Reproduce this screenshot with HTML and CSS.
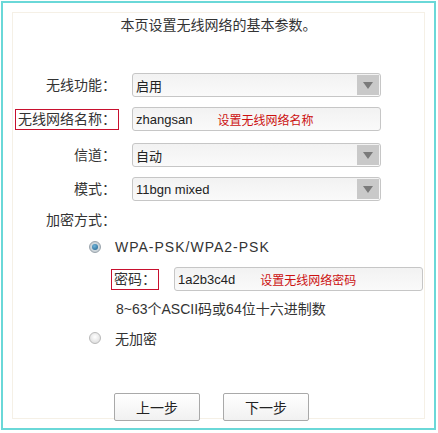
FILE: index.html
```html
<!DOCTYPE html>
<html lang="zh-CN">
<head>
    <meta charset="UTF-8" />
    <title>无线设置</title>
    <link rel="stylesheet" href="styles.css">
</head>
<body>

<div class="frame">
    <div class="panel">
        <p class="intro">本页设置无线网络的基本参数。</p>

        <div class="form">
            <div class="row">
                <div class="label"><span>无线功能：</span></div>
                <div class="select"><span class="value">启用</span><span class="arrow"></span></div>
            </div>
            <div class="row row-wide">
                <div class="label"><span class="mark">无线网络名称：</span></div>
                <div class="input"><span class="value">zhangsan</span><span class="tip">设置无线网络名称</span></div>
            </div>
            <div class="row">
                <div class="label"><span>信道：</span></div>
                <div class="select"><span class="value">自动</span><span class="arrow"></span></div>
            </div>
            <div class="row">
                <div class="label"><span>模式：</span></div>
                <div class="select"><span class="value">11bgn mixed</span><span class="arrow"></span></div>
            </div>

            <div class="enc-title">
                <div class="label"><span>加密方式：</span></div>
            </div>

            <div class="enc">
                <div class="radio-row">
                    <span class="radio checked"></span>
                    <span class="radio-text latin">WPA-PSK/WPA2-PSK</span>
                </div>
                <div class="pw-row">
                    <span class="mark">密码：</span>
                    <div class="input"><span class="value">1a2b3c4d</span><span class="tip">设置无线网络密码</span></div>
                </div>
                <div class="hint">8~63个ASCII码或64位十六进制数</div>
                <div class="radio-row second">
                    <span class="radio"></span>
                    <span class="radio-text">无加密</span>
                </div>
            </div>

            <div class="buttons">
                <button class="btn">上一步</button>
                <button class="btn">下一步</button>
            </div>
        </div>
    </div>
</div>

</body>
</html>
```

FILE: styles.css
```css
body {
    margin: 0;
    font-family: "Liberation Sans", "Noto Sans CJK SC", sans-serif;
    color: #333;
    background: #fff;
}

.frame {
    margin: 1px;
    width: 431px;
    height: 425px;
    border: 2px solid #6ad8d8;
}

.panel {
    margin: 9px;
    height: 405px;
    border: 1px solid #f5f0e6;
}

.intro {
    margin: 2px 0 0;
    font-size: 14px;
    line-height: 20px;
    text-align: center;
    color: #333;
}

.form {
    margin-top: 38px;
}

.row {
    display: flex;
    align-items: center;
    height: 24px;
    margin-bottom: 10px;
}

.row-wide {
    margin-bottom: 12px;
}

.label {
    width: 106px;
    text-align: right;
    font-size: 14px;
    line-height: 19px;
    flex-shrink: 0;
}

.label span,
.mark {
    display: inline-block;
    padding: 0 2px;
    border: 1px solid transparent;
    font-size: 14px;
    line-height: 19px;
}

.mark {
    border-color: #c8102e !important;
}

.select,
.input {
    display: flex;
    align-items: center;
    box-sizing: border-box;
    width: 249px;
    height: 24px;
    margin-left: 13px;
    border: 1px solid #c6c6c6;
    border-radius: 3px;
    background: linear-gradient(#f2f2f2, #fafafa);
    font-size: 13px;
    color: #222;
}

.value {
    padding-left: 3px;
}

.select .value {
    flex: 1;
}

.arrow {
    width: 22px;
    height: 20px;
    margin-right: 1px;
    background: #c9c9c9;
    position: relative;
}

.arrow::after {
    content: "";
    position: absolute;
    left: 6px;
    top: 7px;
    border-left: 5px solid transparent;
    border-right: 5px solid transparent;
    border-top: 7px solid #7a7a7a;
}

.tip {
    margin-left: 25px;
    font-size: 12px;
    color: #cc1111;
}

.enc-title {
    margin-top: 9px;
    height: 18px;
    display: flex;
    align-items: center;
}

.enc {
    padding-left: 76px;
}

.radio-row {
    display: flex;
    align-items: center;
    height: 18px;
    margin-top: 9px;
}

.radio-row.second {
    margin-top: 11px;
}

.radio {
    box-sizing: border-box;
    width: 12px;
    height: 12px;
    border-radius: 50%;
    border: 1px solid #b9b9b9;
    background: radial-gradient(circle at 50% 40%, #ffffff, #d6d6d6);
    margin-right: 14px;
    position: relative;
}

.radio.checked {
    border-color: #9aa4ac;
    background: radial-gradient(circle at 50% 50%, #e8eef2, #b8c2c8);
}

.radio.checked::after {
    content: "";
    position: absolute;
    left: 2px;
    top: 2px;
    width: 6px;
    height: 6px;
    border-radius: 50%;
    background: radial-gradient(circle at 40% 35%, #6fb3d8, #1d5f8c);
}

.radio-text {
    font-size: 14px;
    color: #333;
}

.latin {
    letter-spacing: 1px;
}

.pw-row {
    display: flex;
    align-items: center;
    height: 24px;
    margin-top: 11px;
    padding-left: 22px;
}

.pw-row .input {
    margin-left: 15px;
}

.hint {
    margin-top: 9px;
    padding-left: 27px;
    font-size: 14px;
    line-height: 18px;
    color: #333;
}

.buttons {
    display: flex;
    gap: 23px;
    margin-top: 46px;
    padding-left: 101px;
}

.btn {
    width: 86px;
    height: 28px;
    border: 1px solid #a9a9a9;
    border-radius: 2px;
    background: linear-gradient(#ffffff, #f1f1f1);
    font-family: "Noto Sans CJK SC", sans-serif;
    font-size: 14px;
    color: #222;
    cursor: pointer;
}
```
